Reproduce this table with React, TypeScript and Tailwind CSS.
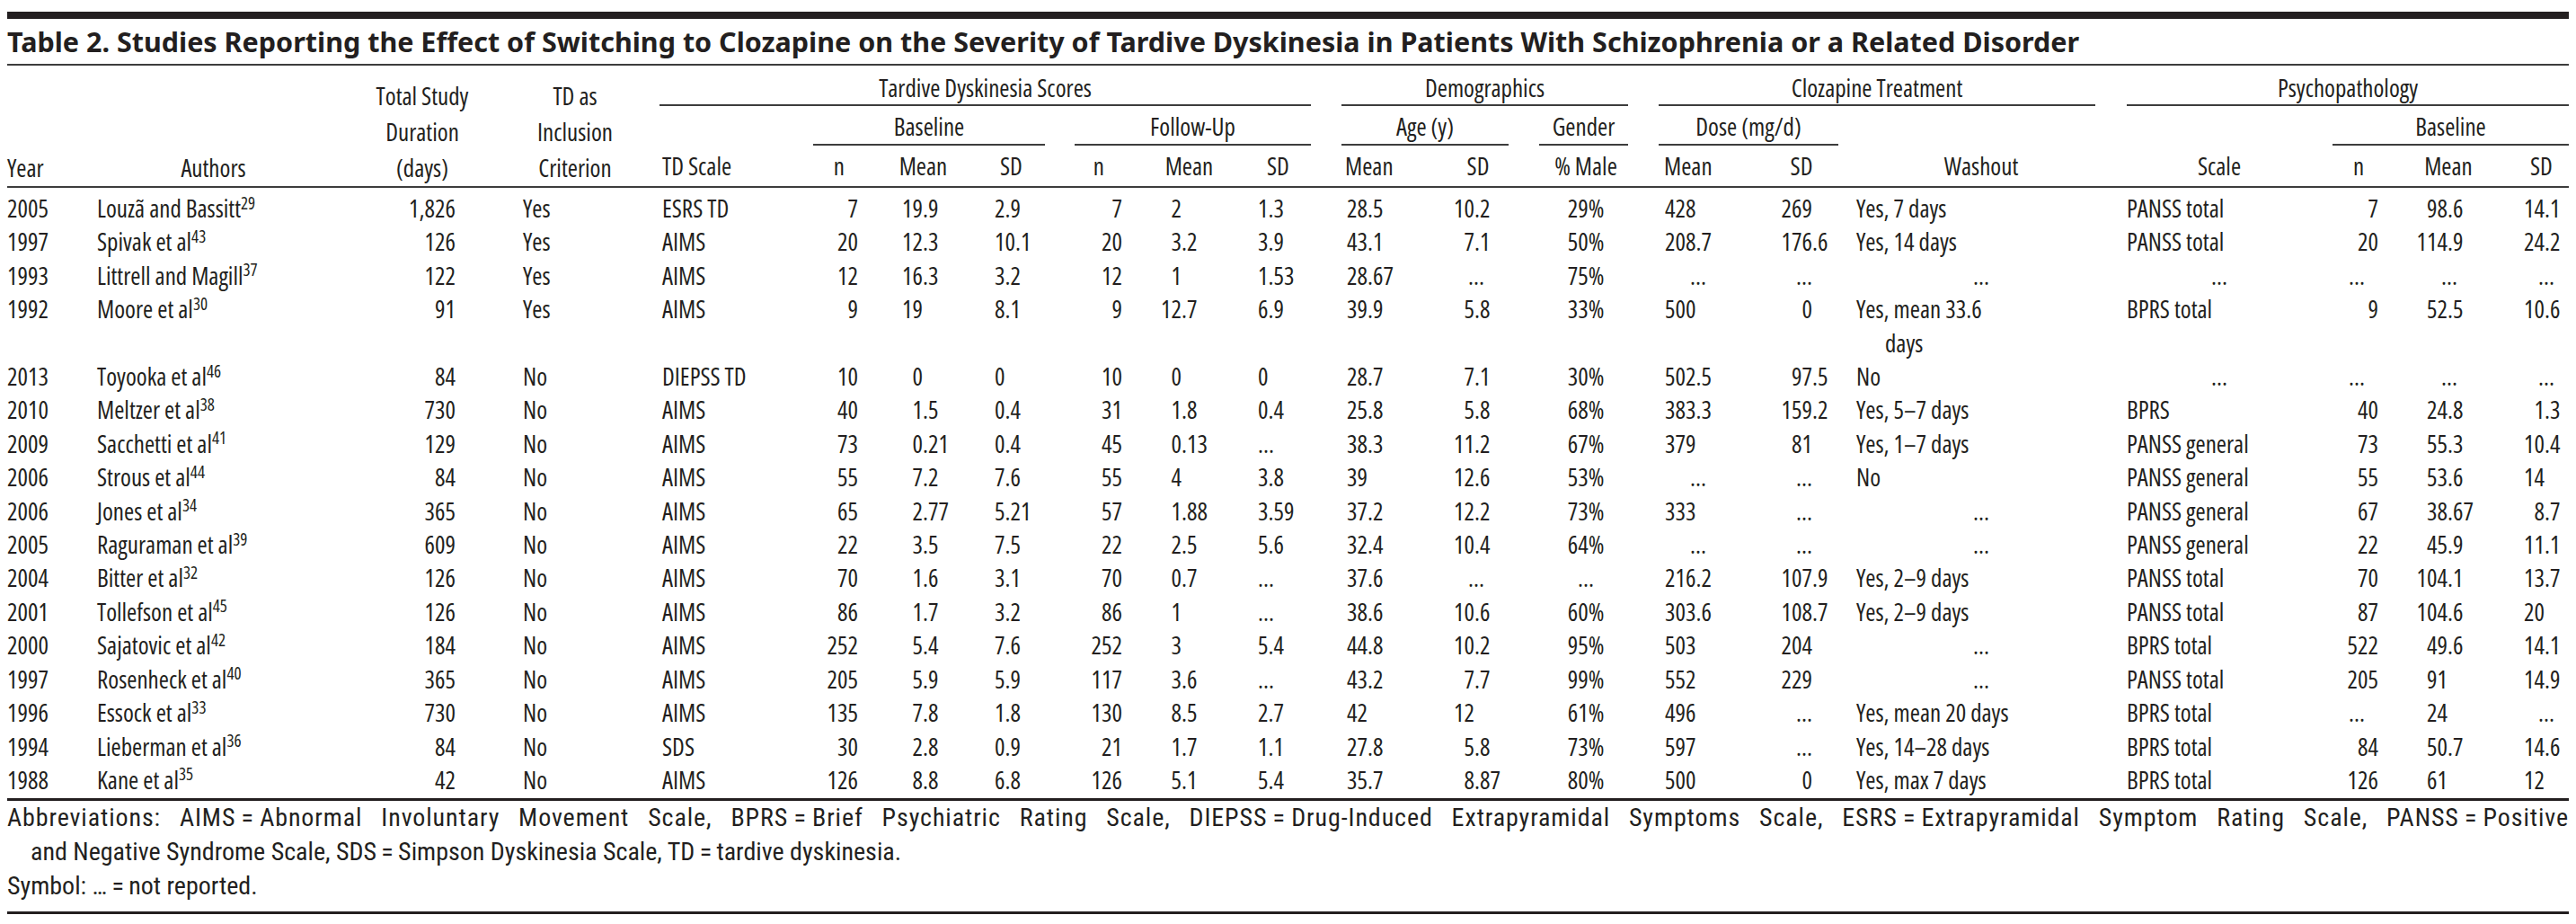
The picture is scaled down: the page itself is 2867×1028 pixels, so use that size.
import React from "react";

const E = "…";
const GRID =
  "grid grid-cols-[92px_275px_190px_150px_185px_65px_125px_90px_82px_123px_90px_115px_110px_130px_120px_110px_290px_240px_70px_130px_69px]";

const rows: string[][] = [
  ["2005","Louzã and Bassitt","29","1,826","Yes","ESRS TD","7","19.9","2.9","7","2","1.3","28.5","10.2","29%","428","269","Yes, 7 days","PANSS total","7","98.6","14.1"],
  ["1997","Spivak et al","43","126","Yes","AIMS","20","12.3","10.1","20","3.2","3.9","43.1","7.1","50%","208.7","176.6","Yes, 14 days","PANSS total","20","114.9","24.2"],
  ["1993","Littrell and Magill","37","122","Yes","AIMS","12","16.3","3.2","12","1","1.53","28.67",E,"75%",E,E,E,E,E,E,E],
  ["1992","Moore et al","30","91","Yes","AIMS","9","19","8.1","9","12.7","6.9","39.9","5.8","33%","500","0","Yes, mean 33.6|days","BPRS total","9","52.5","10.6"],
  ["2013","Toyooka et al","46","84","No","DIEPSS TD","10","0","0","10","0","0","28.7","7.1","30%","502.5","97.5","No",E,E,E,E],
  ["2010","Meltzer et al","38","730","No","AIMS","40","1.5","0.4","31","1.8","0.4","25.8","5.8","68%","383.3","159.2","Yes, 5–7 days","BPRS","40","24.8","1.3"],
  ["2009","Sacchetti et al","41","129","No","AIMS","73","0.21","0.4","45","0.13",E,"38.3","11.2","67%","379","81","Yes, 1–7 days","PANSS general","73","55.3","10.4"],
  ["2006","Strous et al","44","84","No","AIMS","55","7.2","7.6","55","4","3.8","39","12.6","53%",E,E,"No","PANSS general","55","53.6","14"],
  ["2006","Jones et al","34","365","No","AIMS","65","2.77","5.21","57","1.88","3.59","37.2","12.2","73%","333",E,E,"PANSS general","67","38.67","8.7"],
  ["2005","Raguraman et al","39","609","No","AIMS","22","3.5","7.5","22","2.5","5.6","32.4","10.4","64%",E,E,E,"PANSS general","22","45.9","11.1"],
  ["2004","Bitter et al","32","126","No","AIMS","70","1.6","3.1","70","0.7",E,"37.6",E,E,"216.2","107.9","Yes, 2–9 days","PANSS total","70","104.1","13.7"],
  ["2001","Tollefson et al","45","126","No","AIMS","86","1.7","3.2","86","1",E,"38.6","10.6","60%","303.6","108.7","Yes, 2–9 days","PANSS total","87","104.6","20"],
  ["2000","Sajatovic et al","42","184","No","AIMS","252","5.4","7.6","252","3","5.4","44.8","10.2","95%","503","204",E,"BPRS total","522","49.6","14.1"],
  ["1997","Rosenheck et al","40","365","No","AIMS","205","5.9","5.9","117","3.6",E,"43.2","7.7","99%","552","229",E,"PANSS total","205","91","14.9"],
  ["1996","Essock et al","33","730","No","AIMS","135","7.8","1.8","130","8.5","2.7","42","12","61%","496",E,"Yes, mean 20 days","BPRS total",E,"24",E],
  ["1994","Lieberman et al","36","84","No","SDS","30","2.8","0.9","21","1.7","1.1","27.8","5.8","73%","597",E,"Yes, 14–28 days","BPRS total","84","50.7","14.6"],
  ["1988","Kane et al","35","42","No","AIMS","126","8.8","6.8","126","5.1","5.4","35.7","8.87","80%","500","0","Yes, max 7 days","BPRS total","126","61","12"],
];

function Dec({ v, w, centerDots = true }: { v: string; w: string; centerDots?: boolean }) {
  if (v === E) {
    return (
      <span className={`inline-block text-right ${w}`}>
        <span className={centerDots ? "mr-[-11px]" : ""}>{E}</span>
      </span>
    );
  }
  const i = v.indexOf(".");
  const int = i < 0 ? v : v.slice(0, i);
  const frac = i < 0 ? "" : v.slice(i);
  return (
    <span className="whitespace-nowrap">
      <span className={`inline-block text-right ${w}`}>{int}</span>
      {frac}
    </span>
  );
}

function Washout({ v }: { v: string }) {
  if (v === E) return <div className="text-center">{E}</div>;
  const parts = v.split("|");
  return (
    <div className="pl-[38px] indent-[-32px]">
      {parts.map((p, i) => (
        <React.Fragment key={i}>
          {i > 0 && <br />}
          {p}
        </React.Fragment>
      ))}
    </div>
  );
}

function DataRow({ r }: { r: string[] }) {
  return (
    <div className={`${GRID} leading-[37.4px] whitespace-nowrap`}>
      <div>{r[0]}</div>
      <div className="pl-[8px]">
        {r[1]}
        <sup className="text-[19px]">{r[2]}</sup>
      </div>
      <div className="text-right pr-[58px]">{r[3]}</div>
      <div className="pl-[17px]">{r[4]}</div>
      <div className="pl-[22px]">{r[5]}</div>
      <div className="text-right pr-[10px]">{r[6]}</div>
      <div><Dec v={r[7]} w="w-[62px]" /></div>
      <div className="pl-[17px]">{r[8]}</div>
      <div className="text-right pr-[13px]">{r[9]}</div>
      <div><Dec v={r[10]} w="w-[53px]" /></div>
      <div className="pl-[15px]">{r[11]}</div>
      <div className="pl-[24px]">{r[12]}</div>
      <div><Dec v={r[13]} w="w-[51px]" /></div>
      <div className="text-center">{r[14]}</div>
      <div className={r[15] === E ? "text-center" : "pl-[23px]"}>{r[15]}</div>
      <div><Dec v={r[16]} w="w-[67px]" centerDots={false} /></div>
      <Washout v={r[17]} />
      <div className={r[18] === E ? "text-center" : "pl-[17px]"}>{r[18]}</div>
      <div className={r[19] === E ? "text-right pr-[28px]" : "text-right pr-[13px]"}>{r[19]}</div>
      <div><Dec v={r[20]} w="w-[64px]" /></div>
      <div><Dec v={r[21]} w="w-[42px]" /></div>
    </div>
  );
}

const RULE = "h-[2px] bg-[#3d3d3d]";

export default function App() {
  return (
    <div className="w-full h-[1028px] overflow-hidden bg-white px-[8px] pt-[13px] text-[#231f20] font-['Open_Sans',sans-serif] font-stretch-condensed text-[27px]">
      <div className="h-[8px] bg-[#231f20]" />
      <div className="h-[50px] flex items-center whitespace-nowrap font-['Noto_Sans',sans-serif] font-stretch-[62.5%] text-[30.5px] font-bold leading-none">
        Table 2. Studies Reporting the Effect of Switching to Clozapine on the Severity of Tardive Dyskinesia in Patients With Schizophrenia or a Related Disorder
      </div>
      <div className={RULE} />

      {/* Header */}
      <div className={`${GRID} grid-rows-[45px_44px_45px] border-b-2 border-[#3d3d3d] whitespace-nowrap`}>
        <div className="col-start-1 row-start-1 row-span-3 self-end leading-[40px]">Year</div>
        <div className="col-start-2 row-start-1 row-span-3 self-end leading-[40px] text-center">Authors</div>
        <div className="col-start-3 row-start-1 row-span-3 self-end leading-[40px] text-center">
          Total Study<br />Duration<br />(days)
        </div>
        <div className="col-start-4 row-start-1 row-span-3 self-end leading-[40px] text-center">
          TD as<br />Inclusion<br />Criterion
        </div>

        <div className="col-start-5 col-span-7 row-start-1 pt-[7px]">
          <div className="ml-[19px] mr-[16px] text-center">
            <div className="leading-[36px]">Tardive Dyskinesia Scores</div>
            <div className={RULE} />
          </div>
        </div>
        <div className="col-start-12 col-span-3 row-start-1 pt-[7px]">
          <div className="ml-[18px] mr-[18px] text-center">
            <div className="leading-[36px]">Demographics</div>
            <div className={RULE} />
          </div>
        </div>
        <div className="col-start-15 col-span-3 row-start-1 pt-[7px]">
          <div className="ml-[16px] mr-[18px] text-center">
            <div className="leading-[36px]">Clozapine Treatment</div>
            <div className={RULE} />
          </div>
        </div>
        <div className="col-start-18 col-span-4 row-start-1 pt-[7px]">
          <div className="ml-[17px] text-center">
            <div className="leading-[36px]">Psychopathology</div>
            <div className={RULE} />
          </div>
        </div>

        <div className="col-start-6 col-span-3 row-start-2 pt-[4px]">
          <div className="ml-[5px] mr-[17px] text-center">
            <div className="leading-[38px]">Baseline</div>
            <div className={RULE} />
          </div>
        </div>
        <div className="col-start-9 col-span-3 row-start-2 pt-[4px]">
          <div className="ml-[16px] mr-[16px] text-center">
            <div className="leading-[38px]">Follow-Up</div>
            <div className={RULE} />
          </div>
        </div>
        <div className="col-start-12 col-span-2 row-start-2 pt-[4px]">
          <div className="ml-[18px] mr-[21px] text-center">
            <div className="leading-[38px]">Age (y)</div>
            <div className={RULE} />
          </div>
        </div>
        <div className="col-start-14 row-start-2 pt-[4px]">
          <div className="ml-[13px] mr-[18px] text-center">
            <div className="leading-[38px]">Gender</div>
            <div className={RULE} />
          </div>
        </div>
        <div className="col-start-15 col-span-2 row-start-2 pt-[4px]">
          <div className="ml-[16px] mr-[14px] text-center">
            <div className="leading-[38px]">Dose (mg/d)</div>
            <div className={RULE} />
          </div>
        </div>
        <div className="col-start-19 col-span-3 row-start-2 pt-[4px]">
          <div className="ml-[6px] text-center">
            <div className="leading-[38px]">Baseline</div>
            <div className={RULE} />
          </div>
        </div>

        <div className="col-start-5 row-start-3 pt-[4px] leading-[38px] pl-[22px]">TD Scale</div>
        <div className="col-start-6 row-start-3 pt-[4px] leading-[38px] text-right pr-[25px]">n</div>
        <div className="col-start-7 row-start-3 pt-[4px] leading-[38px] text-center">Mean</div>
        <div className="col-start-8 row-start-3 pt-[4px] leading-[38px] pl-[23px]">SD</div>
        <div className="col-start-9 row-start-3 pt-[4px] leading-[38px] text-right pr-[33px]">n</div>
        <div className="col-start-10 row-start-3 pt-[4px] leading-[38px] text-center">Mean</div>
        <div className="col-start-11 row-start-3 pt-[4px] leading-[38px] pl-[25px]">SD</div>
        <div className="col-start-12 row-start-3 pt-[4px] leading-[38px] pl-[22px]">Mean</div>
        <div className="col-start-13 row-start-3 pt-[4px] leading-[38px] text-center">SD</div>
        <div className="col-start-14 row-start-3 pt-[4px] leading-[38px] text-center">% Male</div>
        <div className="col-start-15 row-start-3 pt-[4px] leading-[38px] pl-[22px]">Mean</div>
        <div className="col-start-16 row-start-3 pt-[4px] leading-[38px] text-center">SD</div>
        <div className="col-start-17 row-start-3 pt-[4px] leading-[38px] text-center">Washout</div>
        <div className="col-start-18 row-start-3 pt-[4px] leading-[38px] text-center">Scale</div>
        <div className="col-start-19 row-start-3 pt-[4px] leading-[38px] text-center">n</div>
        <div className="col-start-20 row-start-3 pt-[4px] leading-[38px] text-center">Mean</div>
        <div className="col-start-21 row-start-3 pt-[4px] leading-[38px] pl-[26px]">SD</div>
      </div>

      <div className="pt-[4px] pb-[2px]">
        {rows.map((r, i) => (
          <DataRow key={i} r={r} />
        ))}
      </div>
      <div className="h-[3px] bg-[#231f20]" />

      <div className="leading-[38px] font-['Roboto',sans-serif] font-stretch-condensed text-[28px]">
        <div className="whitespace-nowrap tracking-[0.9px] [text-align-last:justify]">
          Abbreviations: AIMS{"\u2009=\u2009"}Abnormal Involuntary Movement Scale, BPRS{"\u2009=\u2009"}Brief Psychiatric Rating Scale, DIEPSS{"\u2009=\u2009"}Drug-Induced Extrapyramidal Symptoms Scale, ESRS{"\u2009=\u2009"}Extrapyramidal Symptom Rating Scale, PANSS{"\u2009=\u2009"}Positive
        </div>
        <div className="pl-[26px] whitespace-nowrap">
          and Negative Syndrome Scale, SDS{"\u2009=\u2009"}Simpson Dyskinesia Scale, TD{"\u2009=\u2009"}tardive dyskinesia.
        </div>
        <div className="whitespace-nowrap">Symbol: {E}{"\u2009=\u2009"}not reported.</div>
      </div>
      <div className="mt-[9px] h-[3px] bg-[#231f20]" />
    </div>
  );
}
